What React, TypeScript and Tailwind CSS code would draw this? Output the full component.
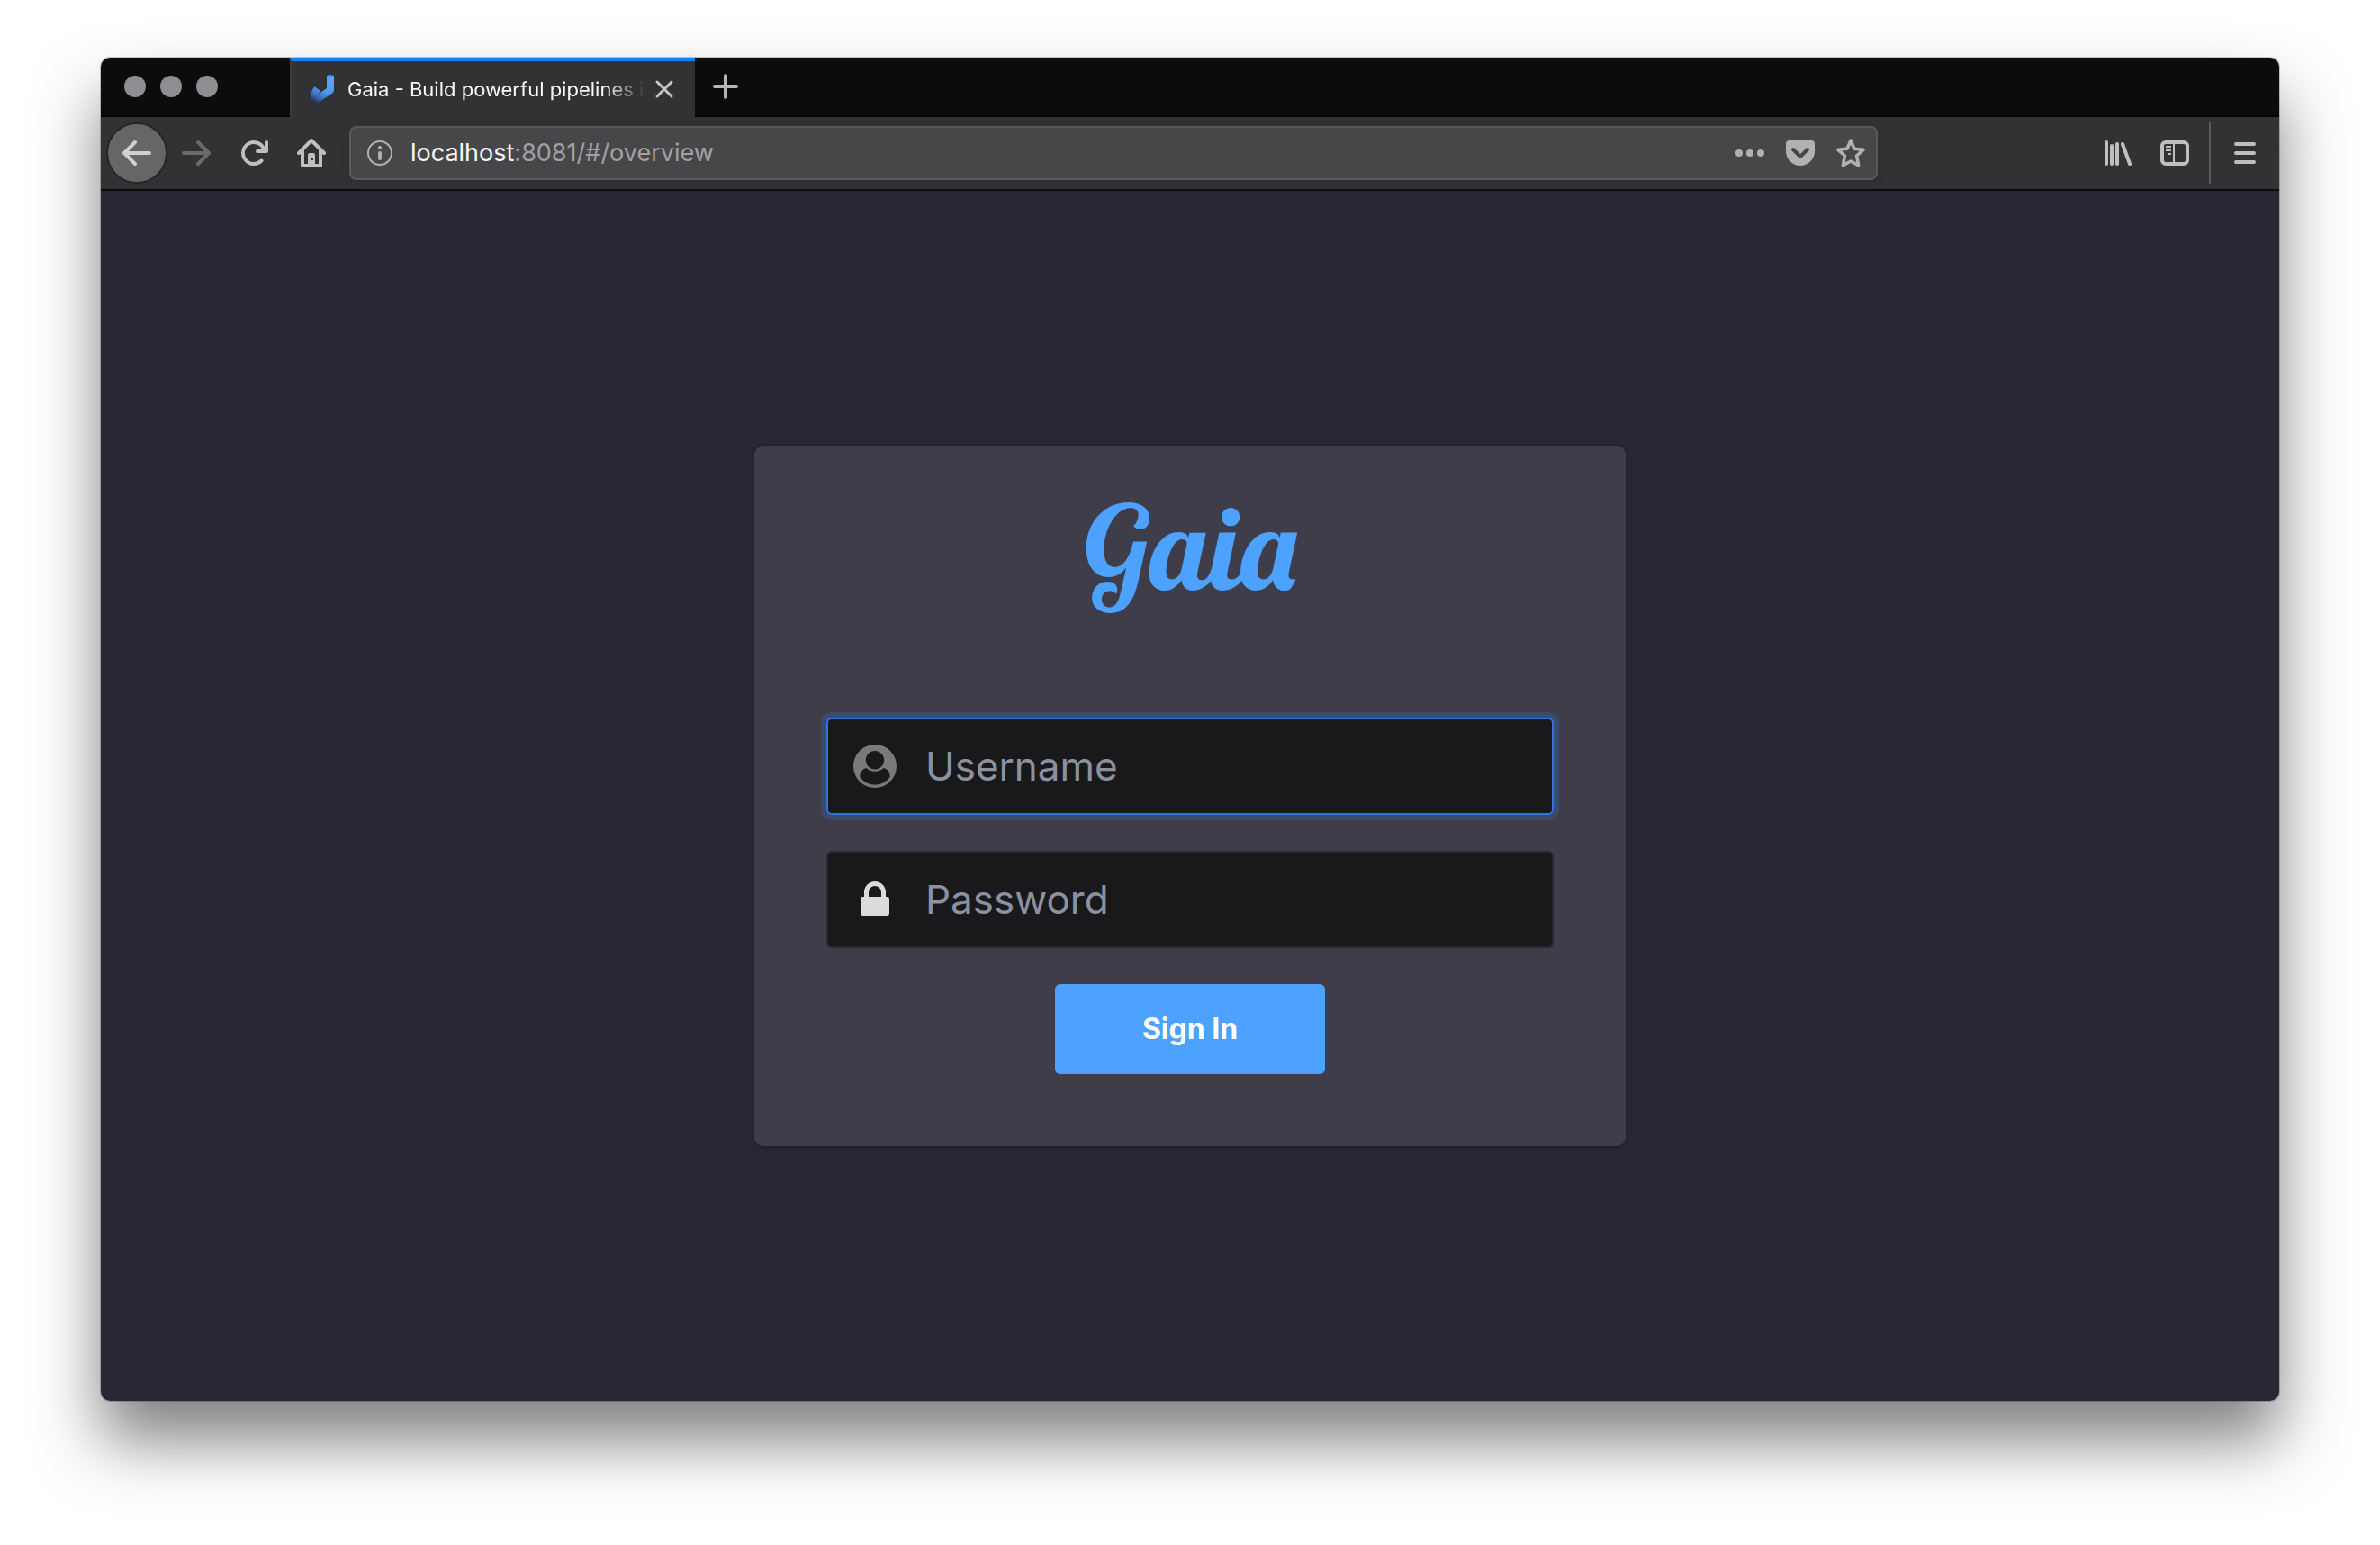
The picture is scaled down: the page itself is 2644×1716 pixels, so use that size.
import type { ReactNode } from "react";

function Icon({ children, className = "" }: { children: ReactNode; className?: string }) {
  return (
    <svg viewBox="0 0 32 32" aria-hidden="true" className={`size-8 shrink-0 ${className}`} fill="currentColor">
      {children}
    </svg>
  );
}

function BackArrow({ className = "" }: { className?: string }) {
  return (
    <Icon className={className}>
      <path
        transform="scale(2)"
        d="M15 7H3.414l4.293-4.293a1 1 0 0 0-1.414-1.414l-6 6a1 1 0 0 0 0 1.414l6 6a1 1 0 0 0 1.414-1.414L3.414 9H15a1 1 0 0 0 0-2z"
      />
    </Icon>
  );
}

function ReloadIcon() {
  return (
    <Icon>
      <path
        transform="scale(2)"
        d="M15 1a1 1 0 0 0-1 1v2.418A6.995 6.995 0 1 0 8 15a6.954 6.954 0 0 0 4.95-2.05 1 1 0 0 0-1.414-1.414A5.019 5.019 0 1 1 12.549 6H10a1 1 0 0 0 0 2h5a1 1 0 0 0 1-1V2a1 1 0 0 0-1-1z"
      />
    </Icon>
  );
}

function HomeIcon() {
  return (
    <Icon>
      <path
        transform="scale(2)"
        fillRule="evenodd"
        d="M15.707 7.293l-7-7a1 1 0 0 0-1.414 0l-7 7a1 1 0 0 0 1.414 1.414L2 8.414V15a1 1 0 0 0 1 1h10a1 1 0 0 0 1-1V8.414l.293.293a1 1 0 0 0 1.414-1.414zM4 14V6.414l4-4 4 4V14h-2V9a1 1 0 0 0-1-1H7a1 1 0 0 0-1 1v5zM8 11h1v1H8z"
      />
    </Icon>
  );
}

function InfoIcon() {
  return (
    <Icon className="text-[#b1b1b3]">
      <circle cx="16" cy="16" r="13" fill="none" stroke="currentColor" strokeWidth="2" />
      <circle cx="16" cy="10" r="2" />
      <rect x="14" y="14" width="4" height="10" rx="2" />
    </Icon>
  );
}

function MoreIcon() {
  return (
    <Icon>
      <circle cx="4" cy="16" r="4" />
      <circle cx="16" cy="16" r="4" />
      <circle cx="28" cy="16" r="4" />
    </Icon>
  );
}

function PocketIcon() {
  return (
    <Icon>
      <path d="M4 2h24a4 4 0 0 1 4 4v8a16 16 0 0 1-32 0V6a4 4 0 0 1 4-4z" />
      <path d="M8 12l8 8 8-8" fill="none" stroke="#474749" strokeWidth="4" strokeLinecap="round" strokeLinejoin="round" />
    </Icon>
  );
}

function StarIcon() {
  return (
    <Icon>
      <path
        d="M16 2l4 9.200 10 1.200-7.400 6.600 2 10.600L16 25l-8.600 4.600 2-10.600L2 12.400l10-1.200z"
        fill="none"
        stroke="currentColor"
        strokeWidth="3.600"
        strokeLinejoin="round"
      />
    </Icon>
  );
}

function LibraryIcon() {
  return (
    <Icon>
      <rect x="2" y="2" width="4" height="28" rx="2" />
      <rect x="8" y="6" width="4" height="24" rx="2" />
      <rect x="14" y="4" width="4" height="26" rx="2" />
      <path d="M22 6l8 22" stroke="currentColor" strokeWidth="4" strokeLinecap="round" />
    </Icon>
  );
}

function SidebarIcon() {
  return (
    <Icon>
      <rect x="2" y="4" width="28" height="24" rx="4" fill="none" stroke="currentColor" strokeWidth="4" />
      <path d="M14 5h2v22h-2zM6 8h6v2H6zM6 12h6v2H6zM8 16h4v2H8z" />
    </Icon>
  );
}

function MenuIcon() {
  return (
    <Icon>
      <rect x="4" y="4" width="24" height="4" rx="2" />
      <rect x="4" y="14" width="24" height="4" rx="2" />
      <rect x="4" y="24" width="24" height="4" rx="2" />
    </Icon>
  );
}

function Favicon() {
  return (
    <svg viewBox="0 0 32 32" aria-hidden="true" className="size-8 shrink-0">
      <defs>
        <linearGradient id="pipe" x1="22" y1="4" x2="8" y2="32" gradientUnits="userSpaceOnUse">
          <stop offset="0" stopColor="#5ba5fb" />
          <stop offset="0.500" stopColor="#4f97f0" />
          <stop offset="0.780" stopColor="#3a6bb4" />
          <stop offset="1" stopColor="#262c4a" />
        </linearGradient>
      </defs>
      <path
        d="M23 2V17L8 27.500C4.500 26 4.500 21 8.500 15.500"
        fill="none"
        stroke="url(#pipe)"
        strokeWidth="8"
        strokeLinejoin="round"
      />
      <ellipse cx="23" cy="2" rx="4" ry="1.800" fill="#5ba5fb" />
      <ellipse cx="23" cy="2.200" rx="3" ry="1" fill="#3c8af0" />
    </svg>
  );
}

function UserIcon() {
  return (
    <svg viewBox="0 0 48 48" aria-hidden="true" className="size-12 text-[#7a7a7a]" fill="currentColor">
      <path
        fillRule="evenodd"
        d="M24 0a24 24 0 1 1 0 48 24 24 0 0 1 0-48zM24 7c-5.600 0-10.200 4.600-10.200 10.300S18.400 27.600 24 27.600s10.200-4.600 10.200-10.300S29.600 7 24 7zM14.500 26c-4 .8-7 4.500-7.300 9.700C11 41.200 17 44.600 24 44.600s13-3.400 16.800-8.900c-.3-5.200-3.300-8.900-7.300-9.700-2.600 2.500-5.800 3.800-9.500 3.800s-6.900-1.300-9.500-3.800z"
      />
    </svg>
  );
}

function LockIcon() {
  return (
    <svg viewBox="0 0 48 48" aria-hidden="true" className="size-12 text-[#dbdbdb]" fill="currentColor">
      <path
        fillRule="evenodd"
        d="M12 21v-5a12 12 0 0 1 24 0v5h1.600A2.400 2.400 0 0 1 40 23.400v16.200a2.400 2.400 0 0 1-2.400 2.400H10.400A2.400 2.400 0 0 1 8 39.600V23.400A2.400 2.400 0 0 1 10.400 21zm5 0h14v-5a7 7 0 0 0-14 0z"
      />
    </svg>
  );
}

function TabStrip() {
  return (
    <div className="flex h-[66px] items-stretch border-b-2 border-black bg-[#0c0c0c]">
      <div className="flex w-[210px] items-center gap-4 pl-[26px]">
        <button aria-label="Close window" className="size-6 rounded-full bg-[#8e8d92]" />
        <button aria-label="Minimize window" className="size-6 rounded-full bg-[#8e8d92]" />
        <button aria-label="Zoom window" className="size-6 rounded-full bg-[#8e8d92]" />
      </div>
      <div className="-mb-0.5 flex w-[450px] items-center border-t-4 border-l-2 border-t-[#0a84ff] border-l-[#3a3a3c] bg-[#323234] pr-[18px] pl-5">
        <Favicon />
        <span className="ml-2.5 min-w-0 flex-1 overflow-hidden whitespace-nowrap text-[22px] leading-8 text-[#f9f9fa] [mask-image:linear-gradient(to_left,transparent,black_48px)]">
          Gaia - Build powerful pipelines in any language
        </span>
        <button aria-label="Close tab" className="ml-1 text-[#c4c4c5]">
          <svg viewBox="0 0 32 32" className="size-8" fill="none" stroke="currentColor" strokeWidth="3" strokeLinecap="round">
            <path d="M8 8l16 16M24 8L8 24" />
          </svg>
        </button>
      </div>
      <button aria-label="New tab" className="ml-[18px] text-[#b6b6b6]">
        <svg viewBox="0 0 32 32" className="size-8" fill="none" stroke="currentColor" strokeWidth="4" strokeLinecap="round">
          <path d="M16 4v24M4 16h24" />
        </svg>
      </button>
    </div>
  );
}

function Toolbar() {
  return (
    <div className="flex h-[82px] items-center border-b-2 border-[#0c0c0d] bg-[#323234] pl-1.5 text-[#bfbfc0]">
      <button
        aria-label="Back"
        className="flex size-[68px] items-center justify-center rounded-full border-2 border-[#262628] bg-[#666667] text-[#d0d0d0]"
      >
        <BackArrow />
      </button>
      <button aria-label="Forward" disabled className="ml-4 text-[#6b6b6d]">
        <BackArrow className="rotate-180" />
      </button>
      <button aria-label="Reload" className="ml-8">
        <ReloadIcon />
      </button>
      <button aria-label="Home" className="ml-8">
        <HomeIcon />
      </button>
      <div className="mr-[250px] ml-[26px] flex h-[60px] flex-1 items-center rounded-lg border-2 border-[#59595b] bg-[#474749] pr-3 pl-4 text-[#b1b1b3] shadow-[0_2px_8px_rgba(0,0,0,0.1)]">
        <button aria-label="Site information">
          <InfoIcon />
        </button>
        <div
          role="textbox"
          aria-label="Address"
          contentEditable
          suppressContentEditableWarning
          className="ml-[18px] flex-1 text-[27px] leading-9 text-[#a1a1a3]"
        >
          <span className="text-[#f9f9fa]">localhost</span>:8081/#/overview
        </div>
        <div className="flex gap-6">
          <button aria-label="Page actions">
            <MoreIcon />
          </button>
          <button aria-label="Save to Pocket">
            <PocketIcon />
          </button>
          <button aria-label="Bookmark this page">
            <StarIcon />
          </button>
        </div>
      </div>
      <div className="flex items-center">
        <button aria-label="Library">
          <LibraryIcon />
        </button>
        <button aria-label="Sidebars" className="ml-8">
          <SidebarIcon />
        </button>
        <div className="ml-[22px] h-[68px] w-0.5 bg-[#5b5b5d]" />
        <button aria-label="Menu" className="mr-[22px] ml-[22px]">
          <MenuIcon />
        </button>
      </div>
    </div>
  );
}

function LoginCard() {
  return (
    <form className="flex w-2/5 min-w-[600px] flex-col items-center gap-10 rounded-[10px] bg-[#3f3d49] p-20 pt-8 shadow-[0_4px_6px_rgba(10,10,10,0.1),0_0_0_2px_rgba(10,10,10,0.1)]">
      <h1 className="mb-[70px] font-[Lobster,'Liberation_Serif',serif] text-[128px] leading-[160px] font-normal text-[#4da1ff]">
        Gaia
      </h1>
      <label className="flex h-[108px] w-full items-center rounded-md border-2 border-[#3273dc] bg-[#19191b] shadow-[0_0_0_6px_rgba(50,115,220,0.25)]">
        <span className="flex w-[104px] justify-center">
          <UserIcon />
        </span>
        <input
          type="text"
          aria-label="Username"
          placeholder="Username"
          className="min-w-0 flex-1 bg-transparent pl-1 text-[44px] leading-[64px] text-white outline-none placeholder:text-[#8c91a0]"
        />
      </label>
      <label className="flex h-[108px] w-full items-center rounded-md border-2 border-[#2a2634] bg-[#19191b]">
        <span className="flex w-[104px] justify-center">
          <LockIcon />
        </span>
        <input
          type="password"
          aria-label="Password"
          placeholder="Password"
          className="min-w-0 flex-1 bg-transparent pl-1 text-[44px] leading-[64px] text-white outline-none placeholder:text-[#8c91a0]"
        />
      </label>
      <button type="button" className="h-[100px] w-[300px] rounded-md bg-[#4da1ff] text-[32px] leading-10 font-bold text-white">
        Sign In
      </button>
    </form>
  );
}

export default function App() {
  return (
    <div className="flex min-h-screen flex-col bg-white px-28 pt-16 pb-40 font-[Inter,'Liberation_Sans',sans-serif]">
      <div className="flex flex-1 flex-col overflow-hidden rounded-[10px] shadow-[0_0_0_1px_rgba(0,0,0,0.2),0_44px_72px_rgba(0,0,0,0.5)]">
        <TabStrip />
        <Toolbar />
        <main className="flex flex-1 items-center justify-center bg-[#2a2634]">
          <LoginCard />
        </main>
      </div>
    </div>
  );
}
